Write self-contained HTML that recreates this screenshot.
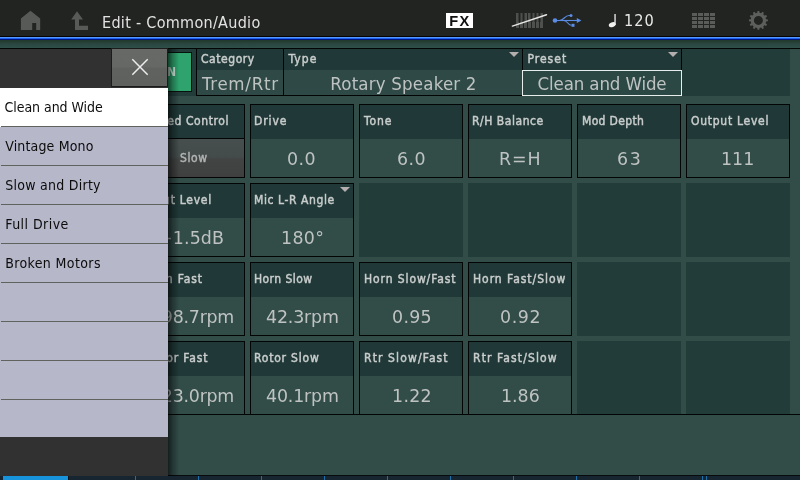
<!DOCTYPE html>
<html><head><meta charset="utf-8"><title>Edit - Common/Audio</title>
<style>
*{box-sizing:border-box;margin:0;padding:0}
html,body{width:800px;height:480px;overflow:hidden;background:#324c48;font-family:"DejaVu Sans Condensed","DejaVu Sans","Liberation Sans",sans-serif;}
#root{position:relative;width:800px;height:480px;overflow:hidden;background:#324c48}
.abs{position:absolute}
.lt,.vt,.hc .h,.hc .v,.li,#title,#tempo,#onbtn{will-change:transform}
#topbar{left:0;top:0;width:800px;height:36px;background:#222421}
#l1{left:0;top:36px;width:800px;height:1px;background:#050505}
#blue{left:0;top:37px;width:800px;height:3px;background:linear-gradient(#5598ff 0,#5598ff 33.3%,#1f60ee 33.3%,#1f60ee 66.6%,#001580 66.6%,#001580 100%)}
#grad{left:0;top:40px;width:800px;height:8px;background:linear-gradient(#20372a,#29453e 45%,#2f4f49)}
#l2{left:0;top:48px;width:800px;height:1px;background:#020504}
#title{left:101.8px;top:13.4px;font-size:16px;line-height:20px;color:#e2e2e2;white-space:nowrap;letter-spacing:0.3px}
#tempo{left:623.8px;top:11.2px;font-size:16.2px;line-height:20px;color:#e8e8e8;white-space:nowrap;letter-spacing:1px}
.cell{position:absolute;width:104px;height:74px;border:1px solid #020504;background:#324c48}
.cell .hb{position:absolute;left:0;top:0;right:0;height:34px;background:#203938}
.cell .btn{position:absolute;left:0;right:0;top:33px;bottom:0;background:linear-gradient(#464e4e 0,#434b4b 46%,#424444 54%,#3f3f3f 100%);border-top:1px solid #020504}
.lt{position:absolute;color:#c9cdcc;font-weight:normal;-webkit-text-stroke:0.45px #c9cdcc;font-size:12px;line-height:20px;white-space:nowrap}
.vt{position:absolute;color:#bec3c2;font-size:18.5px;line-height:26px;white-space:nowrap;transform:scaleX(1.045);transform-origin:0 50%}
.vt.sb{margin-top:-1.1px;transform:none;font-size:12px;font-weight:normal;-webkit-text-stroke:0.45px #b2b4b4;color:#b2b4b4}
.empty{position:absolute;width:104px;height:74px;background:#223c3a}
.tri{position:absolute;width:0;height:0;border-left:5px solid transparent;border-right:5px solid transparent;border-top:5.5px solid #b4aeae}
.hc{position:absolute;top:48px;height:48px;border:1px solid #020504;background:#2f4a46}
.hc .h{position:absolute;left:0;top:0;right:0;height:21px;background:#203938;color:#c9cdcc;font-weight:normal;-webkit-text-stroke:0.45px #c9cdcc;font-size:12px;line-height:21px;padding-left:4.5px;letter-spacing:0.55px}
.hc .v{position:absolute;left:0;right:0;top:21px;bottom:0;color:#bec3c2;font-size:18.5px;line-height:27px;white-space:nowrap;text-align:center}
.li{height:39px;line-height:37px;padding-top:1.3px;padding-left:5.2px;position:relative;white-space:nowrap}
.li.nol::after{display:none}
.li::after{content:'';position:absolute;left:1px;right:0;bottom:0;height:1px;background:#60635d}
</style></head><body>
<div id="root">
<div id="topbar" class="abs"></div>
<div id="l1" class="abs"></div><div id="blue" class="abs"></div><div id="grad" class="abs"></div><div id="l2" class="abs"></div>
<div id="title" class="abs">Edit - Common/Audio</div>
<svg class="abs" style="left:0;top:0" width="800" height="36" viewBox="0 0 800 36">
<path d="M30.5 10.7 L40.2 18.6 L40.2 30 L36.2 30 L36.2 23 L32.2 23 L32.2 30 L20.9 30 L20.9 18.6 Z" fill="#585a58"/>
<path d="M77 11.3 L83 19.5 L79 19.5 L79 25.7 L88 25.7 L88 30 L75 30 L75 19.5 L71.2 19.5 Z" fill="#585a58"/>
<rect x="446" y="13" width="27" height="15" fill="#ffffff"/>
<text x="449.3" y="25.7" font-family="Liberation Sans, sans-serif" font-weight="bold" font-size="14.6" letter-spacing="1.3" fill="#111">FX</text>
<rect x="516" y="13" width="3" height="15" fill="#4e504e"/><rect x="520" y="13" width="3" height="15" fill="#4e504e"/><rect x="524" y="13" width="3" height="15" fill="#4e504e"/><rect x="528" y="13" width="3" height="15" fill="#4e504e"/><rect x="532" y="13" width="3" height="15" fill="#4e504e"/><rect x="536" y="13" width="3" height="15" fill="#4e504e"/><rect x="540" y="13" width="3" height="15" fill="#4e504e"/><rect x="518.5" y="13" width="2" height="9" fill="#222421"/><rect x="522.5" y="13" width="2" height="9" fill="#222421"/><rect x="530.5" y="13" width="2" height="9" fill="#222421"/><rect x="534.5" y="13" width="2" height="9" fill="#222421"/><rect x="538.5" y="13" width="2" height="9" fill="#222421"/>
<path d="M512.4 26.1 L546.5 14.8" stroke="#e6e6e6" stroke-width="1.5" stroke-linecap="round" fill="none"/>
<g fill="none" stroke="#5b8ce6" stroke-width="1.1">
<path d="M555 20.5 L577 20.5"/>
<path d="M559.5 20.5 C564 20.5 564.5 15.5 569 15.5 L570 15.5"/>
<path d="M563.5 20.5 C568 20.5 567.5 25.3 571.5 25.3"/>
</g>
<circle cx="555" cy="20.5" r="2.3" fill="#5b8ce6"/>
<circle cx="571" cy="15.5" r="1.5" fill="#5b8ce6"/>
<rect x="571.5" y="23.8" width="3" height="3" fill="#5b8ce6"/>
<path d="M576.8 18.1 L581.4 20.5 L576.8 22.9 Z" fill="#5b8ce6"/>
<ellipse cx="612.2" cy="24.7" rx="3.5" ry="2.4" transform="rotate(-20 612.2 24.7)" fill="#f0f0f0"/>
<rect x="614.4" y="14" width="1.3" height="11" fill="#f0f0f0"/>
<rect x="692" y="13" width="5" height="3" fill="#5a5c5a"/><rect x="698" y="13" width="5" height="3" fill="#5a5c5a"/><rect x="704" y="13" width="5" height="3" fill="#5a5c5a"/><rect x="710" y="13" width="5" height="3" fill="#5a5c5a"/><rect x="692" y="17" width="5" height="3" fill="#5a5c5a"/><rect x="698" y="17" width="5" height="3" fill="#5a5c5a"/><rect x="704" y="17" width="5" height="3" fill="#5a5c5a"/><rect x="710" y="17" width="5" height="3" fill="#5a5c5a"/><rect x="692" y="21" width="5" height="3" fill="#5a5c5a"/><rect x="698" y="21" width="5" height="3" fill="#5a5c5a"/><rect x="704" y="21" width="5" height="3" fill="#5a5c5a"/><rect x="710" y="21" width="5" height="3" fill="#5a5c5a"/><rect x="692" y="25" width="5" height="3" fill="#5a5c5a"/><rect x="698" y="25" width="5" height="3" fill="#5a5c5a"/><rect x="704" y="25" width="5" height="3" fill="#5a5c5a"/><rect x="710" y="25" width="5" height="3" fill="#5a5c5a"/>
<path d="M766.01 19.20 L767.86 19.51 L767.86 21.29 L766.01 21.60 L765.59 23.16 L767.04 24.35 L766.14 25.90 L764.38 25.25 L763.25 26.38 L763.90 28.14 L762.35 29.04 L761.16 27.59 L759.60 28.01 L759.29 29.86 L757.51 29.86 L757.20 28.01 L755.64 27.59 L754.45 29.04 L752.90 28.14 L753.55 26.38 L752.42 25.25 L750.66 25.90 L749.76 24.35 L751.21 23.16 L750.79 21.60 L748.94 21.29 L748.94 19.51 L750.79 19.20 L751.21 17.64 L749.76 16.45 L750.66 14.90 L752.42 15.55 L753.55 14.42 L752.90 12.66 L754.45 11.76 L755.64 13.21 L757.20 12.79 L757.51 10.94 L759.29 10.94 L759.60 12.79 L761.16 13.21 L762.35 11.76 L763.90 12.66 L763.25 14.42 L764.38 15.55 L766.14 14.90 L767.04 16.45 L765.59 17.64 Z M762.90 20.40 A4.5 4.5 0 1 0 753.90 20.40 A4.5 4.5 0 1 0 762.90 20.40 Z" fill="#5d5f5d" fill-rule="evenodd"/>
</svg>
<div id="tempo" class="abs">120</div>

<div class="abs" style="left:100px;top:49px;width:690px;height:47px;background:#223c3a"></div>
<div class="abs" id="onbtn" style="left:150px;top:52px;width:42px;height:40px;background:#2fa36e;border:1px solid #07120f;color:#d7efe4;font-weight:bold;font-size:12px;line-height:38px;text-align:right;padding-right:15px">ON</div>

<div class="hc" style="left:196px;width:88px"><div class="h" style="padding-left:4px">Category</div><div class="v" style="text-align:left;padding-left:5px;letter-spacing:0.75px">Trem/Rtr</div></div>
<div class="hc" style="left:283px;width:240px"><div class="h" style="letter-spacing:1.1px">Type</div><div class="tri" style="right:3px;top:3px"></div><div class="v" style="letter-spacing:0.2px;padding-left:1px">Rotary Speaker 2</div></div>
<div class="hc" style="left:522px;width:160px"><div class="h" style="letter-spacing:1px">Preset</div><div class="tri" style="right:3px;top:3px"></div><div class="v" style="left:-1px;right:-1px;bottom:-1px;border:1px solid #e8eeec;line-height:25.6px;background:#2c4845;padding-left:0px;letter-spacing:-0.12px">Clean and Wide</div></div>

<div class="cell" style="left:141px;top:104px"><div class="hb"></div><div class="btn"></div></div>
<div class="cell" style="left:250px;top:104px"><div class="hb"></div></div>
<div class="cell" style="left:359px;top:104px"><div class="hb"></div></div>
<div class="cell" style="left:468px;top:104px"><div class="hb"></div></div>
<div class="cell" style="left:577px;top:104px"><div class="hb"></div></div>
<div class="cell" style="left:686px;top:104px"><div class="hb"></div></div>
<div class="cell" style="left:141px;top:183px"><div class="hb"></div></div>
<div class="cell" style="left:250px;top:183px"><div class="hb"></div><div class="tri" style="right:3px;top:3px"></div></div>
<div class="empty" style="left:359px;top:183px"></div>
<div class="empty" style="left:468px;top:183px"></div>
<div class="empty" style="left:577px;top:183px"></div>
<div class="empty" style="left:686px;top:183px"></div>
<div class="cell" style="left:141px;top:262px"><div class="hb"></div></div>
<div class="cell" style="left:250px;top:262px"><div class="hb"></div></div>
<div class="cell" style="left:359px;top:262px"><div class="hb"></div></div>
<div class="cell" style="left:468px;top:262px"><div class="hb"></div></div>
<div class="empty" style="left:577px;top:262px"></div>
<div class="empty" style="left:686px;top:262px"></div>
<div class="cell" style="left:141px;top:341px"><div class="hb"></div></div>
<div class="cell" style="left:250px;top:341px"><div class="hb"></div></div>
<div class="cell" style="left:359px;top:341px"><div class="hb"></div></div>
<div class="cell" style="left:468px;top:341px"><div class="hb"></div></div>
<div class="empty" style="left:577px;top:341px"></div>
<div class="empty" style="left:686px;top:341px"></div>
<div class="lt" style="left:145.00px;top:110.7px;letter-spacing:0.600px">Speed Control</div>
<div class="lt" style="left:254.00px;top:110.7px;letter-spacing:0.900px">Drive</div>
<div class="lt" style="left:364.00px;top:110.7px;letter-spacing:0.900px">Tone</div>
<div class="lt" style="left:472.00px;top:110.7px;letter-spacing:0.540px">R/H Balance</div>
<div class="lt" style="left:582.00px;top:110.7px;letter-spacing:0.337px">Mod Depth</div>
<div class="lt" style="left:691.00px;top:110.7px;letter-spacing:0.736px">Output Level</div>
<div class="lt" style="left:144.00px;top:189.7px;letter-spacing:0.740px">Input Level</div>
<div class="lt" style="left:254.00px;top:189.7px;letter-spacing:0.600px">Mic L-R Angle</div>
<div class="lt" style="left:144.00px;top:268.7px;letter-spacing:0.900px">Horn Fast</div>
<div class="lt" style="left:254.00px;top:268.7px;letter-spacing:0.450px">Horn Slow</div>
<div class="lt" style="left:364.00px;top:268.7px;letter-spacing:0.900px">Horn Slow/Fast</div>
<div class="lt" style="left:473.00px;top:268.7px;letter-spacing:0.969px">Horn Fast/Slow</div>
<div class="lt" style="left:146.00px;top:347.7px;letter-spacing:0.850px">Rotor Fast</div>
<div class="lt" style="left:254.00px;top:347.7px;letter-spacing:0.800px">Rotor Slow</div>
<div class="lt" style="left:364.00px;top:347.7px;letter-spacing:1.125px">Rtr Slow/Fast</div>
<div class="lt" style="left:473.00px;top:347.7px;letter-spacing:1.125px">Rtr Fast/Slow</div>
<div class="vt sb" style="left:180.00px;top:146.2px;letter-spacing:0.600px">Slow</div>
<div class="vt" style="left:287.00px;top:146.2px;letter-spacing:0.450px">0.0</div>
<div class="vt" style="left:397.00px;top:146.2px;letter-spacing:0.450px">6.0</div>
<div class="vt" style="left:499.00px;top:146.2px;letter-spacing:0.900px">R=H</div>
<div class="vt" style="left:617.00px;top:146.2px;letter-spacing:1.700px">63</div>
<div class="vt" style="left:721.00px;top:146.2px;letter-spacing:-0.000px">111</div>
<div class="vt" style="left:158.00px;top:225.2px;letter-spacing:0.150px">+1.5dB</div>
<div class="vt" style="left:281.00px;top:225.2px;letter-spacing:0.300px">180°</div>
<div class="vt" style="left:151.00px;top:304.2px;letter-spacing:-0.220px">398.7rpm</div>
<div class="vt" style="left:266.00px;top:304.2px;letter-spacing:-0.150px">42.3rpm</div>
<div class="vt" style="left:392.00px;top:304.2px;letter-spacing:0.300px">0.95</div>
<div class="vt" style="left:500.00px;top:304.2px;letter-spacing:0.600px">0.92</div>
<div class="vt" style="left:151.00px;top:383.2px;letter-spacing:-0.220px">423.0rpm</div>
<div class="vt" style="left:266.00px;top:383.2px;letter-spacing:-0.150px">40.1rpm</div>
<div class="vt" style="left:392.00px;top:383.2px;letter-spacing:0.300px">1.22</div>
<div class="vt" style="left:501.00px;top:383.2px;letter-spacing:0.000px">1.86</div>
<div class="abs" style="left:0;top:414px;width:800px;height:1px;background:#020504"></div>

<div class="abs" style="left:0;top:475px;width:800px;height:5px;background:#16252f;border-top:1px solid #070b0d"></div>
<div class="abs" style="left:3px;top:476px;width:65px;height:4px;background:#1793dc"></div>
<div class="abs" style="left:135px;top:476px;width:1px;height:4px;background:#1f6fa8"></div>
<div class="abs" style="left:198px;top:476px;width:1px;height:4px;background:#1f6fa8"></div>
<div class="abs" style="left:261px;top:476px;width:1px;height:4px;background:#1f6fa8"></div>
<div class="abs" style="left:324px;top:476px;width:1px;height:4px;background:#1f6fa8"></div>
<div class="abs" style="left:387px;top:476px;width:1px;height:4px;background:#1f6fa8"></div>
<div class="abs" style="left:450px;top:476px;width:1px;height:4px;background:#1f6fa8"></div>
<div class="abs" style="left:513px;top:476px;width:1px;height:4px;background:#1f6fa8"></div>
<div class="abs" style="left:576px;top:476px;width:1px;height:4px;background:#1f6fa8"></div>
<div class="abs" style="left:639px;top:476px;width:1px;height:4px;background:#1f6fa8"></div>
<div class="abs" style="left:702px;top:476px;width:1px;height:4px;background:#1f6fa8"></div>
<div class="abs" style="left:706px;top:476px;width:1px;height:4px;background:#1f6fa8"></div>
<div class="abs" style="left:68px;top:476px;width:1px;height:4px;background:#0a141b"></div>

<div id="overlay" style="">
<div class="abs" style="left:168px;top:49px;width:11px;height:427px;background:linear-gradient(90deg,rgba(0,0,0,.6),rgba(0,0,0,.3) 40%,rgba(0,0,0,0))"></div>
<div class="abs" id="panel" style="left:0;top:49px;width:168px;height:427px;background:#313131"></div>
<div class="abs" id="close" style="left:111px;top:48px;width:57px;height:39px;background:linear-gradient(#676966 0,#666865 49%,#606260 51%,#5f615e 100%);border:1px solid #1c1c1c"></div>
<svg class="abs" style="left:111px;top:48px" width="57" height="39"><path d="M21.3 11.3 L36.7 26.7 M36.7 11.3 L21.3 26.7" stroke="#ececec" stroke-width="1.5" fill="none"/></svg>
<div class="abs" id="list" style="left:0;top:88px;width:168px;height:349px;background:#b6b7c9;font-size:14px;color:#0c0c0c;overflow:hidden">
 <div class="li" style="background:#fff;letter-spacing:-0.06px;padding-left:4.6px">Clean and Wide</div>
 <div class="li" style="letter-spacing:0.16px">Vintage Mono</div>
 <div class="li" style="letter-spacing:0.26px">Slow and Dirty</div>
 <div class="li" style="letter-spacing:0.46px">Full Drive</div>
 <div class="li" style="letter-spacing:0.38px">Broken Motors</div>
 <div class="li"></div><div class="li"></div><div class="li"></div><div class="li nol"></div>
</div>
</div>
</div>
</body></html>
